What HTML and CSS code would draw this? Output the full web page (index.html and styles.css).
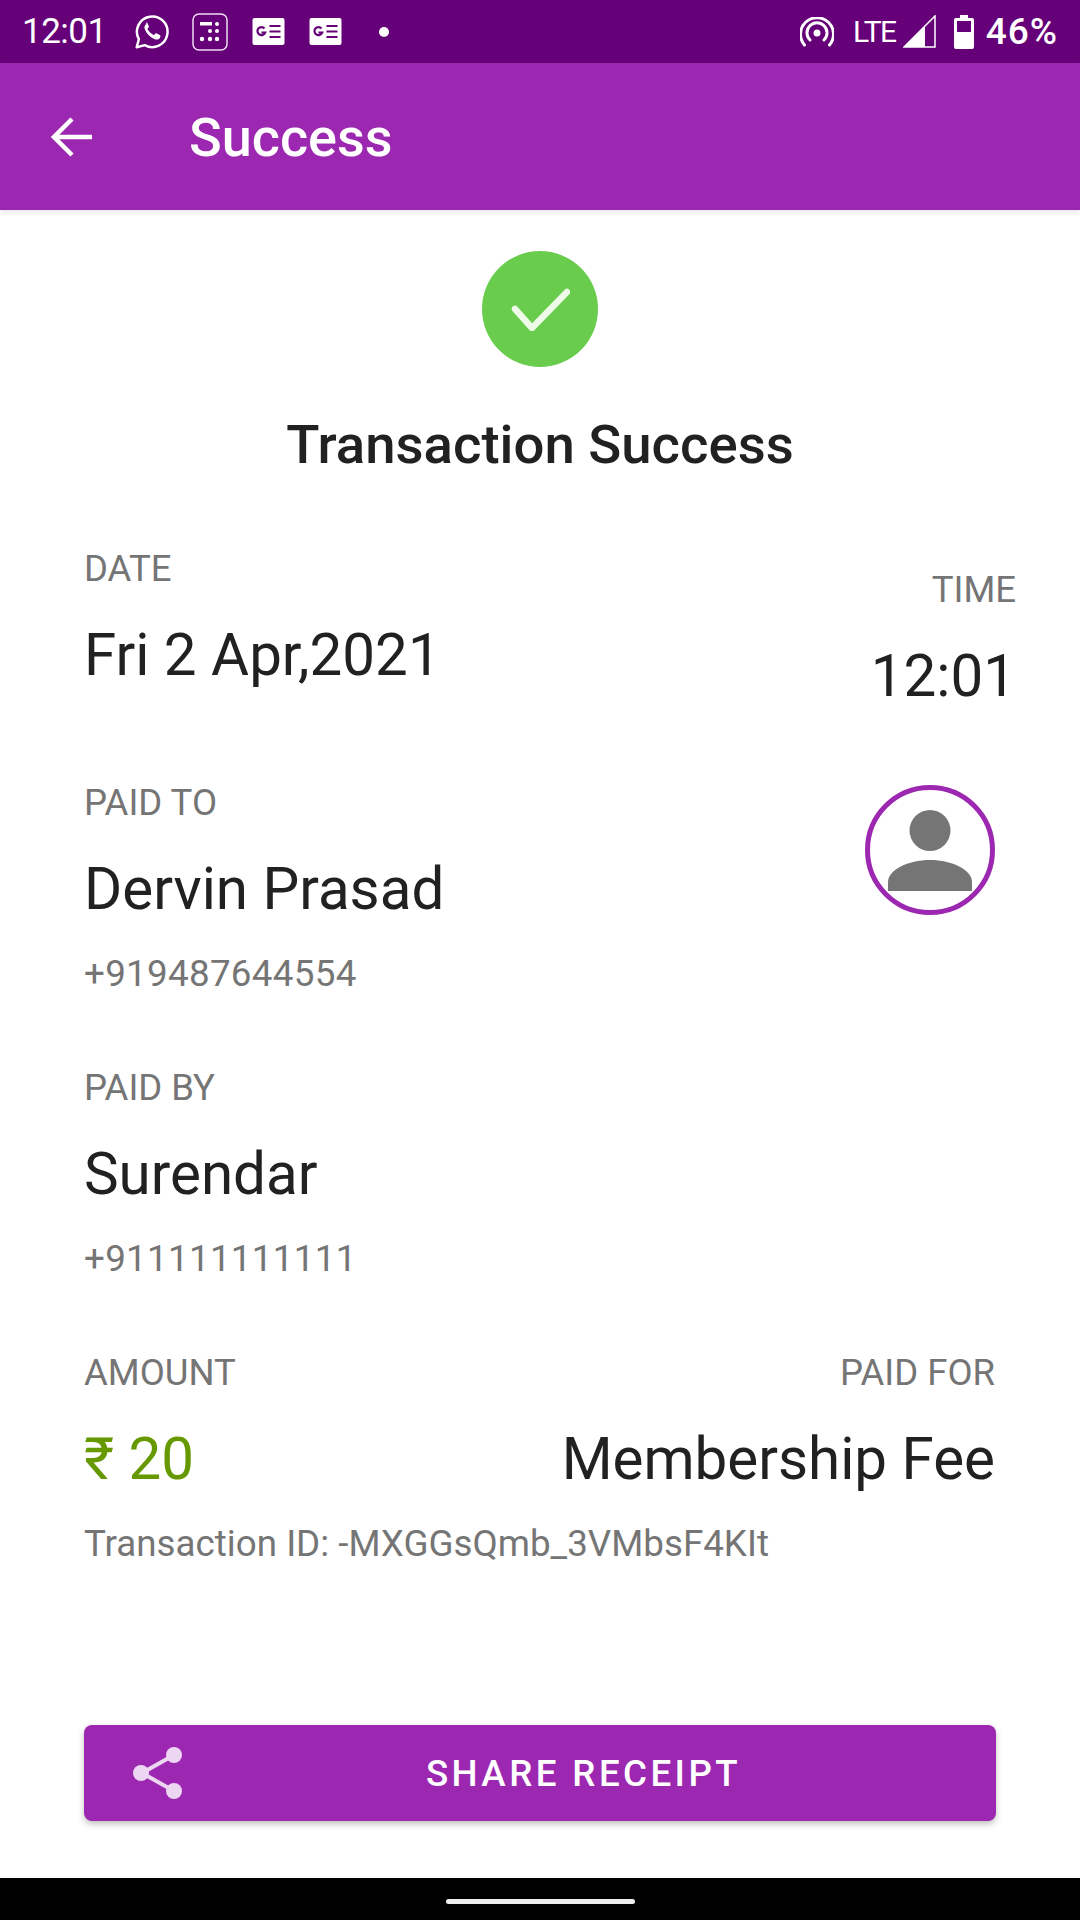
FILE: index.html
```html
<!DOCTYPE html>
<html lang="en">
<head>
    <meta charset="UTF-8">
    <meta name="viewport" content="width=device-width, initial-scale=1.0">
    <link rel="stylesheet" href="styles.css">
</head>
<body>
    <div class="status-bar">
        <span class="clock">12:01</span>
        <svg class="ic-whatsapp" width="36" height="38" viewBox="0 0 40 40"><path d="M3 37l2.400-9A17 17 0 1 1 12 34.600z" fill="none" stroke="#fff" stroke-width="2.800" stroke-linejoin="round"/><path d="M14 11c-2 1-3 3-2 6 2 5 6 9 11 11 3 1 5 0 6-2 .5-1 .5-2 0-2.500l-4-2c-.7-.3-1.200 0-1.600.5l-1.200 1.500c-3-1-6-4-7.400-7l1.400-1.400c.4-.4.500-.9.300-1.400l-1.800-4c-.3-.5-.7-.5-1.700.3z" fill="#fff"/></svg>
        <svg class="ic-calc" width="36" height="38" viewBox="0 0 36 38"><rect x="1" y="1" width="34" height="36" rx="6" fill="none" stroke="#f0dcf4" stroke-width="1.500"/><rect x="8" y="9" width="12" height="3.500" fill="#fff"/><circle cx="25" cy="11" r="2" fill="#fff"/><circle cx="18" cy="18" r="2" fill="#fff"/><circle cx="25" cy="18" r="2" fill="#fff"/><circle cx="10" cy="26" r="2.200" fill="#fff"/><circle cx="18" cy="26" r="2.200" fill="#fff"/><circle cx="25" cy="26" r="2.200" fill="#fff"/></svg>
        <svg class="ic-news" width="33" height="27" viewBox="0 0 32 27"><rect width="32" height="27" rx="2" fill="#fff"/><path d="M12 10.500a4 4 0 1 0 .7 4h-3.700" fill="none" stroke="#660078" stroke-width="2.200"/><path d="M17 8h11M17 13.500h11M17 19h11" stroke="#660078" stroke-width="2.200"/></svg>
        <svg class="ic-news" width="33" height="27" viewBox="0 0 32 27"><rect width="32" height="27" rx="2" fill="#fff"/><path d="M12 10.500a4 4 0 1 0 .7 4h-3.700" fill="none" stroke="#660078" stroke-width="2.200"/><path d="M17 8h11M17 13.500h11M17 19h11" stroke="#660078" stroke-width="2.200"/></svg>
        <span class="dot"></span>
        <span class="status-right">
            <svg width="34" height="30" viewBox="0 0 34 30"><circle cx="17" cy="16" r="3.500" fill="#fff"/><path d="M10 23a10 10 0 1 1 14 0M4.500 28a16.500 16.500 0 1 1 25 0" fill="none" stroke="#fff" stroke-width="3" stroke-linecap="round"/></svg>
            <span class="lte">LTE</span>
            <svg class="signal" width="33" height="33" viewBox="0 0 33 33"><path d="M32 1v31H1z" fill="none" stroke="#fff" stroke-width="1.500"/><path d="M22 11.500V32H1z" fill="#fff"/></svg>
            <svg class="battery" width="20" height="34" viewBox="0 0 20 34"><path d="M6 0h8v3h4a2 2 0 0 1 2 2v27a2 2 0 0 1-2 2H2a2 2 0 0 1-2-2V5a2 2 0 0 1 2-2h4z" fill="#fff"/><rect x="3" y="6" width="14" height="11" fill="#660078"/></svg>
            <span class="battery-level">46%</span>
        </span>
    </div>

    <div class="toolbar">
        <svg class="back" width="42" height="42" viewBox="0 0 42 42"><path d="M41 21H3M21 3L3 21l18 18" fill="none" stroke="#fff" stroke-width="4.500"/></svg>
        <span class="toolbar-title">Success</span>
    </div>

    <div class="content">
        <div class="check">
            <svg width="60" height="44" viewBox="0 0 60 44"><path d="M5 22l17 19L57 5" fill="none" stroke="#eefbe9" stroke-width="6.500" stroke-linecap="round" stroke-linejoin="round"/></svg>
        </div>
        <h1 class="heading">Transaction Success</h1>

        <div class="row date-row">
            <div>
                <div class="label">DATE</div>
                <div class="value">Fri 2 Apr,2021</div>
            </div>
            <div class="time">
                <div class="label">TIME</div>
                <div class="value">12:01</div>
            </div>
        </div>

        <div class="row person-row">
            <div>
                <div class="label">PAID TO</div>
                <div class="value">Dervin Prasad</div>
                <div class="sub phone">+919487644554</div>
            </div>
            <div class="avatar">
                <svg width="84" height="84" viewBox="0 0 84 84"><circle cx="42" cy="20.500" r="20.500" fill="#757575"/><path d="M0 81v-9c0-12 20-22 42-22s42 10 42 22v9z" fill="#757575"/></svg>
            </div>
        </div>

        <div class="row person-row2">
            <div>
                <div class="label">PAID BY</div>
                <div class="value">Surendar</div>
                <div class="sub phone">+911111111111</div>
            </div>
        </div>

        <div class="row amount-row">
            <div>
                <div class="label">AMOUNT</div>
                <div class="value amount">₹ 20</div>
            </div>
            <div class="paid-for">
                <div class="label">PAID FOR</div>
                <div class="value">Membership Fee</div>
            </div>
        </div>
        <div class="sub">Transaction ID: -MXGGsQmb_3VMbsF4KIt</div>

        <div class="share-btn">
            <svg class="share-icon" width="50" height="54" viewBox="0 0 50 54"><path d="M41 9L9 27l32 18" fill="none" stroke="#ecd6f1" stroke-width="4"/><circle cx="41" cy="9" r="8" fill="#ecd6f1"/><circle cx="8" cy="27" r="8" fill="#ecd6f1"/><circle cx="41" cy="45" r="8" fill="#ecd6f1"/></svg>
            <span>SHARE RECEIPT</span>
        </div>
    </div>

    <div class="nav-bar"><span class="home-pill"></span></div>
</body>
</html>
```

FILE: styles.css
```css
* {
    box-sizing: border-box;
}
body {
    font-family: Roboto, sans-serif;
    margin: 0;
    width: 1080px;
    height: 1920px;
    display: flex;
    flex-direction: column;
    background-color: #fff;
    overflow: hidden;
}
.status-bar {
    height: 63px;
    background-color: #660078;
    color: #fff;
    display: flex;
    align-items: center;
    padding: 0 22px;
    flex-shrink: 0;
}
.clock {
    font-size: 35px;
    letter-spacing: -0.5px;
    width: 112px;
}
.ic-whatsapp {
    margin-right: 22px;
}
.ic-calc {
    margin-right: 24px;
}
.ic-news {
    margin-right: 24px;
}
.dot {
    width: 10px;
    height: 10px;
    border-radius: 50%;
    background: #fff;
    margin-left: 13px;
}
.status-right {
    margin-left: auto;
    display: flex;
    align-items: center;
}
.lte {
    font-size: 30px;
    letter-spacing: -1.500px;
    margin-left: 19px;
}
.signal {
    margin-left: 7px;
}
.battery {
    margin-left: 18px;
}
.battery-level {
    font-size: 37px;
    font-weight: 500;
    letter-spacing: 1px;
    margin-left: 12px;
}
.toolbar {
    height: 147px;
    background-color: #9c27b0;
    color: #fff;
    display: flex;
    align-items: center;
    padding-left: 51px;
    flex-shrink: 0;
    box-shadow: 0 2px 4px rgba(0, 0, 0, 0.1);
    z-index: 1;
}
.toolbar-title {
    font-size: 54px;
    font-weight: 500;
    margin-left: 96px;
    padding-top: 2px;
}
.content {
    flex: 1;
    padding: 41px 84px 0;
    display: flex;
    flex-direction: column;
}
.check {
    width: 116px;
    height: 116px;
    border-radius: 50%;
    background-color: #69cc4d;
    align-self: center;
    display: flex;
    align-items: center;
    justify-content: center;
}
.heading {
    font-size: 54.500px;
    font-weight: 500;
    color: #212121;
    text-align: center;
    margin: 47px 0 0;
    line-height: 60px;
}
.row {
    display: flex;
    justify-content: space-between;
}
.date-row {
    margin-top: 75px;
}
.label {
    font-size: 36.500px;
    line-height: 40px;
    color: #757575;
}
.value {
    font-size: 58.300px;
    line-height: 64px;
    color: #212121;
    margin-top: 34px;
}
.sub {
    font-size: 36.750px;
    line-height: 40px;
    color: #757575;
    margin-top: 33px;
}
.phone {
    letter-spacing: 0.3px;
}
.time {
    text-align: right;
    margin-top: 21px;
    margin-right: -20px;
}
.person-row {
    margin-top: 75px;
}
.avatar {
    width: 130px;
    height: 130px;
    border: 5px solid #9c27b0;
    border-radius: 50%;
    margin-top: 2px;
    margin-right: 1px;
    display: flex;
    justify-content: center;
    padding-top: 20px;
}
.person-row2 {
    margin-top: 74px;
}
.amount-row {
    margin-top: 74px;
}
.amount {
    color: #669900;
}
.paid-for {
    text-align: right;
    margin-right: 1px;
}
.share-btn {
    margin-top: 161px;
    height: 96px;
    background-color: #9c27b0;
    border-radius: 8px;
    box-shadow: 0 3px 6px rgba(0, 0, 0, 0.25);
    color: #fff;
    display: flex;
    align-items: center;
    font-size: 36.750px;
    font-weight: 500;
    letter-spacing: 3.400px;
}
.share-btn span {
    flex: 1;
    text-align: center;
    padding-right: 12px;
}
.share-icon {
    margin-left: 49px;
}
.nav-bar {
    height: 42px;
    background-color: #000;
    display: flex;
    justify-content: center;
    align-items: flex-start;
    padding-top: 21px;
    flex-shrink: 0;
}
.home-pill {
    width: 189px;
    height: 5px;
    border-radius: 3px;
    background: #eee;
}
```
